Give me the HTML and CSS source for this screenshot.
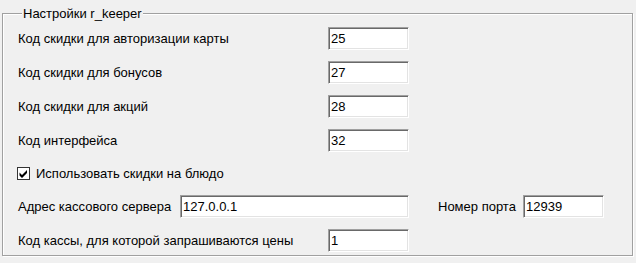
FILE: index.html
```html
<!DOCTYPE html>
<html lang="ru">
<head>
  <meta charset="UTF-8" />
  <title>Настройки r_keeper</title>
  <link rel="stylesheet" href="styles.css">
</head>
<body>
  <fieldset class="group">
    <legend>Настройки r_keeper</legend>
    <div class="row">
      <label class="caption">Код скидки для авторизации карты</label>
      <input class="field" type="text" value="25" />
    </div>
    <div class="row">
      <label class="caption">Код скидки для бонусов</label>
      <input class="field" type="text" value="27" />
    </div>
    <div class="row">
      <label class="caption">Код скидки для акций</label>
      <input class="field" type="text" value="28" />
    </div>
    <div class="row">
      <label class="caption">Код интерфейса</label>
      <input class="field" type="text" value="32" />
    </div>
    <div class="row check-row">
      <span class="check">
        <svg width="11" height="11" viewBox="0 0 11 11"><path d="M1.5 4.5 L4 7 L9 2 L9 5 L4 10 L1.5 7.5 Z" fill="#000"/></svg>
      </span>
      <label>Использовать скидки на блюдо</label>
    </div>
    <div class="row">
      <label class="caption short">Адрес кассового сервера</label>
      <input class="field wide" type="text" value="127.0.0.1" />
      <label class="caption port">Номер порта</label>
      <input class="field" type="text" value="12939" />
    </div>
    <div class="row">
      <label class="caption">Код кассы, для которой запрашиваются цены</label>
      <input class="field" type="text" value="1" />
    </div>
  </fieldset>
</body>
</html>
```
FILE: styles.css
```css
* {
  box-sizing: border-box;
}
body {
  margin: 0;
  padding: 6px 3px 3px 2px;
  background: #f0f0f0;
  font-family: 'Liberation Sans', Arial, sans-serif;
  font-size: 13px;
  color: #000;
}
.group {
  margin: 0;
  height: 250px;
  padding: 6px 0 0 15px;
  border: 1px solid #a0a0a0;
  box-shadow: inset 1px 1px #fff, 1px 1px #fff;
  display: flex;
  flex-direction: column;
  gap: 11px;
}
.group legend {
  margin-left: 4px;
  padding: 0 1px;
  background: #f0f0f0;
  position: relative;
}
.row {
  display: flex;
  align-items: center;
  height: 23px;
}
.caption {
  width: 310px;
}
.caption.short {
  width: 162px;
}
.caption.port {
  width: 85px;
  margin-left: 29px;
}
.field {
  width: 81px;
  height: 23px;
  padding: 0 2px;
  font: inherit;
  color: #000;
  background: #fff;
  border: 1px solid;
  border-color: #a0a0a0 #fff #fff #a0a0a0;
  box-shadow: inset 1px 1px #696969, inset -1px -1px #e3e3e3;
  outline: none;
}
.field.wide {
  width: 229px;
}
.check-row {
  height: 19px;
  margin: 1px 0 1px;
}
.check {
  width: 13px;
  height: 13px;
  margin: 0 6px 0 -1px;
  background: #fff;
  border: 1px solid #333;
  display: flex;
  align-items: center;
  justify-content: center;
}
```
